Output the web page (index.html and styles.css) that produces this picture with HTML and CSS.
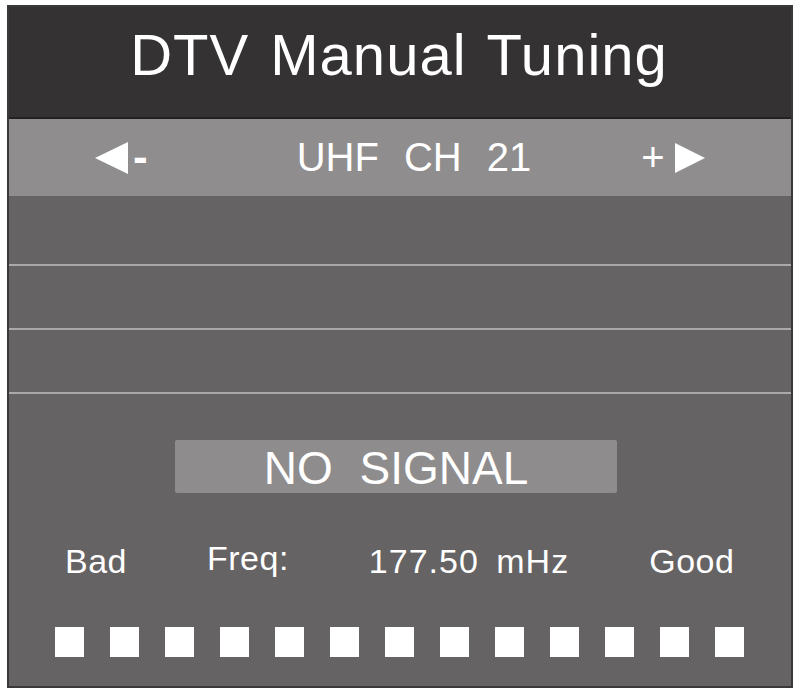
FILE: index.html
```html
<!DOCTYPE html>
<html lang="en">
<head>
    <meta charset="UTF-8">
    <meta name="viewport" content="width=device-width, initial-scale=1.0">
    <title>DTV Manual Tuning</title>
    <link rel="stylesheet" href="styles.css">
</head>
<body>
    <div class="panel">
        <div class="title">DTV Manual Tuning</div>
        <div class="channel">
            <div class="step step-left">
                <svg width="33" height="32" viewBox="0 0 33 32"><polygon points="33,0 0,16 33,32" fill="#ffffff"/></svg>
                <span>-</span>
            </div>
            <div class="channel-name">UHF CH 21</div>
            <div class="step step-right">
                <span>+</span>
                <svg width="30" height="30" viewBox="0 0 30 30"><polygon points="0,0 30,15 0,30" fill="#ffffff"/></svg>
            </div>
        </div>
        <div class="rows">
            <div class="row row-first"></div>
            <div class="row"></div>
            <div class="row"></div>
        </div>
        <div class="status">NO SIGNAL</div>
        <div class="info">
            <span>Bad</span>
            <span class="freq">Freq:</span>
            <span class="freq-value">177.50 mHz</span>
            <span>Good</span>
        </div>
        <div class="meter">
            <div class="cell"></div>
            <div class="cell"></div>
            <div class="cell"></div>
            <div class="cell"></div>
            <div class="cell"></div>
            <div class="cell"></div>
            <div class="cell"></div>
            <div class="cell"></div>
            <div class="cell"></div>
            <div class="cell"></div>
            <div class="cell"></div>
            <div class="cell"></div>
            <div class="cell"></div>
        </div>
    </div>
</body>
</html>
```

FILE: styles.css
```css
body {
    margin: 0;
    background-color: #ffffff;
    font-family: 'Liberation Sans', Arial, sans-serif;
    color: #ffffff;
}
.panel {
    box-sizing: border-box;
    width: 786px;
    height: 683px;
    margin: 5px 0 0 7px;
    border: 2px solid #3a3839;
    background-color: #656364;
}
.title {
    height: 110px;
    line-height: 96px;
    border-bottom: 2px solid #232122;
    background-color: #343233;
    text-align: center;
    font-size: 58px;
    letter-spacing: 1px;
    word-spacing: 4px;
    padding-right: 2px;
}
.channel {
    display: flex;
    align-items: center;
    height: 77px;
    padding-left: 86px;
    background-color: #8f8d8e;
    font-size: 40px;
}
.step {
    display: flex;
    align-items: center;
}
.step-left span {
    margin-left: 5px;
    margin-top: -2px;
    font-size: 44px;
    font-weight: bold;
}
.channel-name {
    margin-left: 149px;
    word-spacing: 14px;
}
.step-right {
    margin-left: 110px;
}
.step-right span {
    margin-right: 10px;
}
.rows {
    display: flex;
    flex-direction: column;
}
.row {
    height: 62px;
    border-bottom: 2px solid #aaa8a9;
}
.row-first {
    height: 68px;
}
.status {
    width: 442px;
    height: 53px;
    margin: 46px 0 0 166px;
    background-color: #8e8c8d;
    border-radius: 2px;
    text-align: center;
    line-height: 56px;
    font-size: 46px;
    word-spacing: 14px;
}
.info {
    display: flex;
    gap: 80px;
    margin-top: 48px;
    padding-left: 56px;
    font-size: 34px;
    line-height: 40px;
    letter-spacing: 0.5px;
}
.freq {
    margin-top: -3px;
}
.freq-value {
    letter-spacing: 1px;
    word-spacing: 7px;
}
.meter {
    display: flex;
    gap: 26px;
    margin-top: 46px;
    padding-left: 46px;
}
.cell {
    width: 29px;
    height: 30px;
    background-color: #ffffff;
}
```
